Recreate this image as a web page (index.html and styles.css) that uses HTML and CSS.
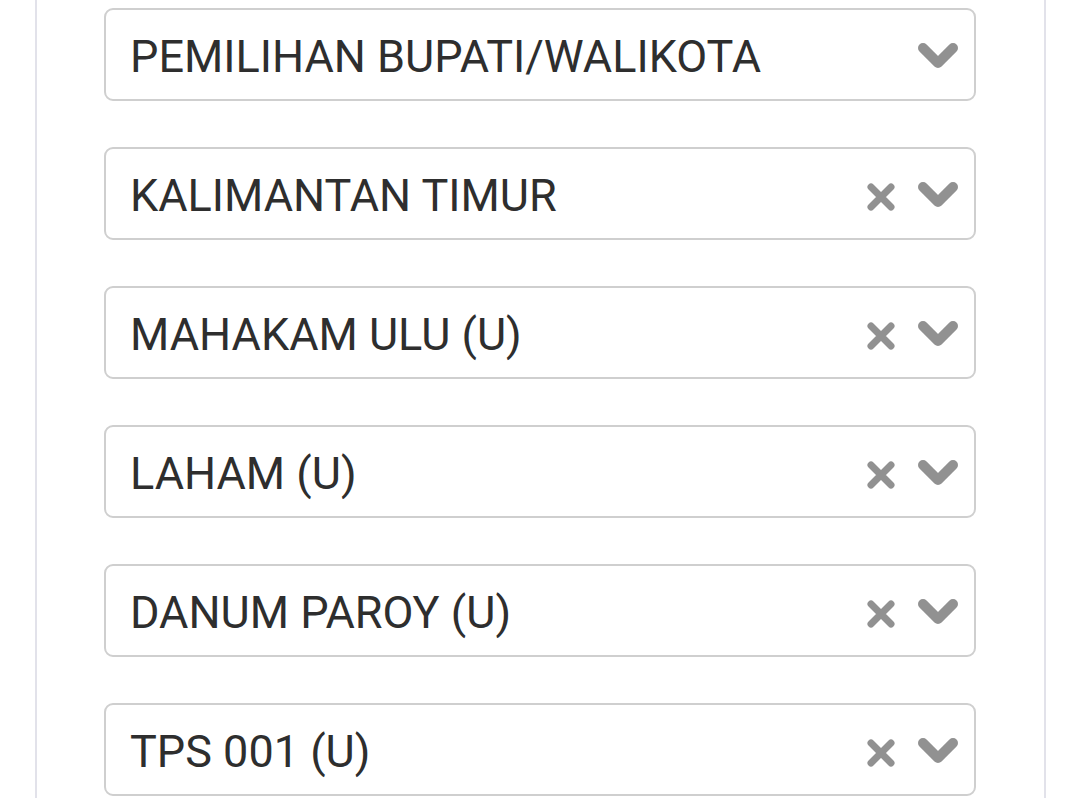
FILE: index.html
```html
<!DOCTYPE html>
<html>
<head>
<meta charset="utf-8">
<link rel="stylesheet" href="styles.css">
</head>
<body>
<div class="panel">
  <div class="select">
    <span class="value">PEMILIHAN BUPATI/WALIKOTA</span>
    <span class="icons">
      <svg class="chev" viewBox="0 0 40 28"><path d="M5 6 L20 21 L35 6"/></svg>
    </span>
  </div>
  <div class="select">
    <span class="value">KALIMANTAN TIMUR</span>
    <span class="icons">
      <svg class="clear" viewBox="0 0 30 30"><path d="M5 5 L25 25 M25 5 L5 25"/></svg>
      <svg class="chev" viewBox="0 0 40 28"><path d="M5 6 L20 21 L35 6"/></svg>
    </span>
  </div>
  <div class="select">
    <span class="value">MAHAKAM ULU (U)</span>
    <span class="icons">
      <svg class="clear" viewBox="0 0 30 30"><path d="M5 5 L25 25 M25 5 L5 25"/></svg>
      <svg class="chev" viewBox="0 0 40 28"><path d="M5 6 L20 21 L35 6"/></svg>
    </span>
  </div>
  <div class="select">
    <span class="value">LAHAM (U)</span>
    <span class="icons">
      <svg class="clear" viewBox="0 0 30 30"><path d="M5 5 L25 25 M25 5 L5 25"/></svg>
      <svg class="chev" viewBox="0 0 40 28"><path d="M5 6 L20 21 L35 6"/></svg>
    </span>
  </div>
  <div class="select">
    <span class="value">DANUM PAROY (U)</span>
    <span class="icons">
      <svg class="clear" viewBox="0 0 30 30"><path d="M5 5 L25 25 M25 5 L5 25"/></svg>
      <svg class="chev" viewBox="0 0 40 28"><path d="M5 6 L20 21 L35 6"/></svg>
    </span>
  </div>
  <div class="select">
    <span class="value">TPS 001 (U)</span>
    <span class="icons">
      <svg class="clear" viewBox="0 0 30 30"><path d="M5 5 L25 25 M25 5 L5 25"/></svg>
      <svg class="chev" viewBox="0 0 40 28"><path d="M5 6 L20 21 L35 6"/></svg>
    </span>
  </div>
</div>
</body>
</html>
```
FILE: styles.css
```css
html, body {
  margin: 0;
  padding: 0;
  background: #ffffff;
  height: 798px;
  overflow: hidden;
}
.panel {
  margin-left: 35px;
  width: 1011px;
  height: 798px;
  box-sizing: border-box;
  border-left: 2px solid #e2e2ea;
  border-right: 2px solid #e2e2ea;
  padding: 8px 68px 0 67px;
  display: flex;
  flex-direction: column;
  gap: 46px;
}
.select {
  height: 93px;
  box-sizing: border-box;
  border: 2px solid #cfcfcf;
  border-radius: 9px;
  display: flex;
  align-items: center;
  padding: 0 16px 0 24px;
  font-family: Roboto, "Liberation Sans", sans-serif;
  font-size: 45px;
  color: #2e2e2e;
}
.value {
  flex: 1;
  padding-top: 3px;
  white-space: nowrap;
}
.icons {
  display: flex;
  align-items: center;
  gap: 22px;
  padding-top: 2px;
}
.icons svg {
  fill: none;
  stroke: #919191;
  stroke-linecap: round;
  stroke-linejoin: round;
}
.chev {
  width: 40px;
  height: 28px;
  stroke-width: 10;
}
.clear {
  width: 30px;
  height: 30px;
  stroke-width: 7;
  margin-top: 4px;
}
```
